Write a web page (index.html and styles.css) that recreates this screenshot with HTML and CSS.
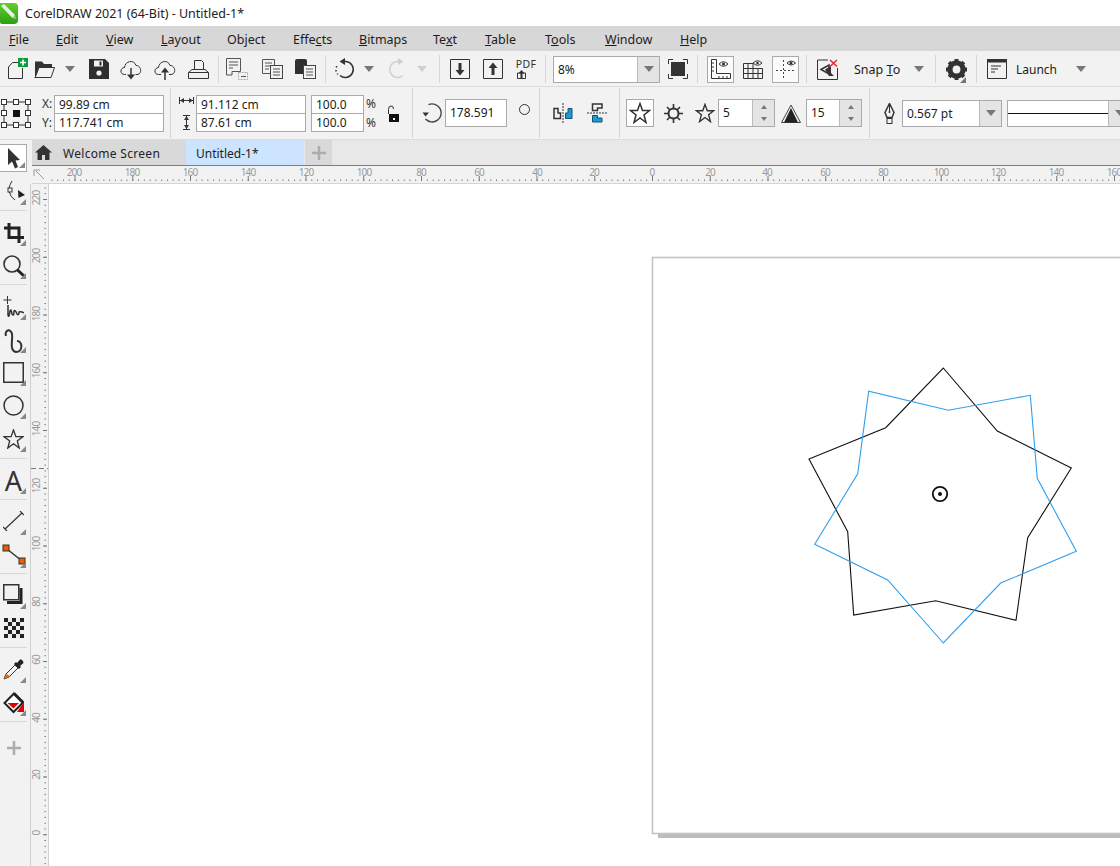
FILE: index.html
```html
<!DOCTYPE html>
<html lang="en">
<head>
    <meta charset="UTF-8">
    <title>CorelDRAW 2021 (64-Bit) - Untitled-1*</title>
    <link rel="stylesheet" href="styles.css">
</head>
<body>
<div class="app">

    <header class="titlebar">
        <svg class="logo" width="18" height="21" viewBox="0 0 18 21">
            <defs>
                <linearGradient id="logoGreen" x1="0" y1="0" x2="0" y2="1">
                    <stop offset="0" stop-color="#5fd02a"/>
                    <stop offset="1" stop-color="#2aa012"/>
                </linearGradient>
            </defs>
            <path d="M0 0H14Q18 0 18 4V17Q18 21 14 21H2Q0 21 0 19Z" fill="url(#logoGreen)"/>
            <path d="M1 3L4 1L15 12L12.500 15Z" fill="#e8efe6"/>
            <path d="M12.500 15L15 12L16 16Z" fill="#9ccf86"/>
        </svg>
        <span>CorelDRAW 2021 (64-Bit) - Untitled-1*</span>
    </header>

    <nav class="menubar">
        <a class="m-file"><u>F</u>ile</a>
        <a class="m-edit"><u>E</u>dit</a>
        <a class="m-view"><u>V</u>iew</a>
        <a class="m-layout"><u>L</u>ayout</a>
        <a class="m-object">Ob<u>j</u>ect</a>
        <a class="m-effects">Effe<u>c</u>ts</a>
        <a class="m-bitmaps"><u>B</u>itmaps</a>
        <a class="m-text">Te<u>x</u>t</a>
        <a class="m-table"><u>T</u>able</a>
        <a class="m-tools">T<u>o</u>ols</a>
        <a class="m-window"><u>W</u>indow</a>
        <a class="m-help"><u>H</u>elp</a>
    </nav>

    <!-- standard toolbar -->
    <div class="toolbar">
        <div class="tb w30"><svg width="22" height="22" viewBox="0 0 22 22"><path d="M6.500 4.500H12M2.500 9L6.500 4.500M2.500 9V20.500H16.500V10" class="ln"/><rect x="12" y="0" width="10" height="9" fill="#0c9a3c"/><path d="M17 1.500V7.500M14 4.500H20" stroke="#fff" stroke-width="1.600"/></svg></div>
        <div class="tb w26"><svg width="22" height="20" viewBox="0 0 22 20"><path d="M1 2.500H8L10 5H18V8H5L1 19Z" fill="#333"/><path d="M1 19L5 8.500H20.500L17 18.500H1Z" class="ln"/></svg></div>
        <div class="tb w24"><i class="dd"></i></div>
        <div class="tb w34"><svg width="20" height="20" viewBox="0 0 20 20"><path d="M0 0H16L20 4V20H0Z" fill="#2f2f2f"/><rect x="5" y="1.500" width="9" height="6" fill="#f2f2f2"/><rect x="10.500" y="2.500" width="2" height="4" fill="#2f2f2f"/><circle cx="10" cy="14" r="2.600" fill="#f2f2f2"/></svg></div>
        <div class="tb w30"><svg width="22" height="21" viewBox="0 0 22 21"><path d="M6 15.500H4.500C-0.500 15.500 0 8.500 4.500 8.500C5 2 14 0 16 6.500C21 6 23 15 17 15.500H15.500" class="ln"/><path d="M11 9V18" class="ln2"/><path d="M7 15.500L11 20.500L15 15.500Z" fill="#333"/></svg></div>
        <div class="tb w38"><svg width="22" height="21" viewBox="0 0 22 21"><path d="M7 15.500H4.500C-0.500 15.500 0 8.500 4.500 8.500C5 2 14 0 16 6.500C21 6 23 15 17 15.500H15" class="ln"/><path d="M11 12V21" class="ln2"/><path d="M7 13.500L11 8.500L15 13.500Z" fill="#333"/></svg></div>
        <div class="tb w28"><svg width="21" height="19" viewBox="0 0 21 19"><path d="M6.500 10V0.500H13.500L15.500 2.500V10M0.500 12.500H20.500V18.500H0.500ZM0.500 12.500L4 9.500H17L20.500 12.500" class="ln"/></svg></div>
        <div class="tb w12"><i class="sep"></i></div>
        <div class="tb w26"><svg width="22" height="22" viewBox="0 0 22 22"><path d="M0.500 0.500H14.500V13.500H6V17H0.500Z" class="ln-soft"/><path d="M3 4H12M3 7H12M3 10H7" class="ln-soft"/><path d="M12.500 14.500H21.500V21.500H12.500Z" fill="#f2f2f2" stroke="#aaa" stroke-dasharray="2 1"/><path d="M15 18.500H20" class="ln-soft"/></svg></div>
        <div class="tb w44"><svg width="21" height="20" viewBox="0 0 21 20"><path d="M0.500 0.500H12.500V14.500H0.500Z" class="ln-soft"/><path d="M3 4H10M3 7H10M3 10H7" class="ln-soft"/><rect x="8.500" y="6.500" width="12" height="13" fill="#f2f2f2" stroke="#444"/><path d="M11 10H18M11 13H18M11 16H18" class="ln-soft"/></svg></div>
        <div class="tb w22"><svg width="21" height="20" viewBox="0 0 21 20"><path d="M0 2Q0 0 2 0H10Q12 0 12 2V15H0Z" fill="#2f2f2f"/><rect x="8.500" y="6.500" width="12" height="13" fill="#f2f2f2" stroke="#444"/><path d="M11 10H18M11 13H18M11 16H18" class="ln-soft"/></svg></div>
        <div class="tb w18"><i class="sep"></i></div>
        <div class="tb w22"><svg width="22" height="22" viewBox="0 0 22 22"><path d="M9.500 3.500H12A8 8 0 1 1 6 17.500" class="ln2"/><path d="M11 0L5.500 3.500L11 7Z" fill="#333"/><path d="M2.500 8V9.500M2 12V13.500M3.500 15.500V16.500" class="ln2"/></svg></div>
        <div class="tb w26"><i class="dd"></i></div>
        <div class="tb w32"><svg width="22" height="22" viewBox="0 0 22 22"><path d="M12.500 3.500H10A8 8 0 1 0 16 17.500" fill="none" stroke="#d0d0d0" stroke-width="1.500"/><path d="M11 0L16.500 3.500L11 7Z" fill="#d0d0d0"/></svg></div>
        <div class="tb w16"><i class="dd dd-off"></i></div>
        <div class="tb w18"><i class="sep"></i></div>
        <div class="tb w24"><svg width="20" height="20" viewBox="0 0 20 20"><path d="M0.500 0.500H19.500V19.500H0.500Z" class="ln"/><path d="M10 4V12" stroke="#333" stroke-width="3"/><path d="M5.500 11H14.500L10 16.500Z" fill="#333"/></svg></div>
        <div class="tb w42"><svg width="20" height="20" viewBox="0 0 20 20"><path d="M0.500 0.500H19.500V19.500H0.500Z" class="ln"/><path d="M10 16V8" stroke="#333" stroke-width="3"/><path d="M5.500 9H14.500L10 3.500Z" fill="#333"/></svg></div>
        <div class="tb w24 pdf"><span>PDF</span><svg width="9" height="9" viewBox="0 0 9 9"><path d="M0.500 3H8.500V8.500H0.500Z" class="ln"/><path d="M4.500 0L7.500 3.500H1.500Z" fill="#333"/><path d="M3.500 3H5.500V8H3.500Z" fill="#333"/></svg></div>
        <div class="tb w15"><i class="sep"></i></div>
        <div class="combo c-zoom"><span class="val">8%</span><span class="arrow"><i class="dd"></i></span></div>
        <div class="tb w36"><svg width="20" height="20" viewBox="0 0 20 20"><path d="M0.500 5V0.500H5M15 0.500H19.500V5M19.500 15V19.500H15M5 19.500H0.500V15" class="ln"/><rect x="3" y="3" width="14" height="14" fill="#333"/></svg></div>
        <div class="tb w2"><i class="sep"></i></div>
        <div class="tb tb-on"><svg width="20" height="20" viewBox="0 0 20 20"><path d="M0.500 0.500H5.500V14.500H19.500V19.500H0.500Z" class="ln"/><path d="M0.500 4H3M0.500 8H3M0.500 12H3M8 19.500V17M12 19.500V17M16 19.500V17" class="ln"/><path d="M8 5Q12.500 0.500 17 5Q12.500 9.500 8 5Z" class="ln"/><circle cx="12.500" cy="5" r="1.500" fill="#333"/></svg></div>
        <div class="tb w38"><svg width="20" height="20" viewBox="0 0 20 20"><path d="M0.500 4.500H10M0.500 9.500H19.500M0.500 14.500H19.500M0.500 19.500H19.500M0.500 4.500V19.500M5 4.500V19.500M10 4.500V19.500M15 9.500V19.500M19.500 9.500V19.500" class="ln"/><path d="M10 4Q14.500 -0.500 19 4Q14.500 8.500 10 4Z" fill="#f2f2f2" stroke="#333"/><circle cx="14.500" cy="4" r="1.300" fill="#333"/></svg></div>
        <div class="tb tb-on"><svg width="20" height="20" viewBox="0 0 20 20"><path d="M7.500 1V20M0 11.500H20" stroke="#444" stroke-dasharray="2 2" fill="none"/><path d="M11 4Q15 0 19.500 4Q15 8 11 4Z" fill="#fff" stroke="#333"/><circle cx="15" cy="4" r="1.500" fill="#333"/></svg></div>
        <div class="tb w14"><i class="sep"></i></div>
        <div class="tb w28"><svg width="21" height="21" viewBox="0 0 21 21"><path d="M11 1H0.500V20.500H20.500V9" class="ln"/><path d="M4 10.500L12 6V15Z" class="ln2"/><path d="M8 10.500L14 7V14L17 17H12Z" fill="#333"/><path d="M13 1L20 7.500M20 1L13 7.500" stroke="#e8262a" stroke-width="1.500"/></svg></div>
        <div class="tb-text tb-snap">Snap <u>T</u>o</div>
        <div class="tb w28"><i class="dd"></i></div>
        <div class="tb w4"><i class="sep"></i></div>
        <div class="tb w38 corner"><svg width="21" height="21" viewBox="0 0 24 24"><circle cx="12" cy="12" r="7.500" fill="none" stroke="#333" stroke-width="6"/><path d="M12 0V5M12 19V24M0 12H5M19 12H24M3.500 3.500L7 7M17 17L20.500 20.500M3.500 20.500L7 17M17 7L20.500 3.500" stroke="#333" stroke-width="4.400"/></svg></div>
        <div class="tb w2"><i class="sep"></i></div>
        <div class="tb w39"><svg width="20" height="20" viewBox="0 0 20 20"><path d="M0.500 0.500H19.500V19.500H0.500Z" class="ln"/><rect x="0" y="0" width="20" height="3.500" fill="#333"/><path d="M4 7H14M4 10H11M4 13H8" class="ln"/></svg></div>
        <div class="tb-text w48">Launch</div>
        <div class="tb w33"><i class="dd"></i></div>
    </div>

    <!-- property bar -->
    <div class="propbar">
        <div class="pb w41"><svg width="30" height="29" viewBox="0 0 30 29"><g fill="#fff" stroke="#333"><rect x="0.500" y="0.500" width="5" height="5"/><rect x="12.500" y="0.500" width="5" height="5"/><rect x="24.500" y="0.500" width="5" height="5"/><rect x="0.500" y="11.500" width="5" height="5"/><rect x="24.500" y="11.500" width="5" height="5"/><rect x="0.500" y="23.500" width="5" height="5"/><rect x="12.500" y="23.500" width="5" height="5"/><rect x="24.500" y="23.500" width="5" height="5"/></g><path d="M6 3H12M18 3H24M3 6V11M27 6V11M3 17V23M27 17V23M6 26H12M18 26H24" stroke="#333"/><rect x="12" y="11" width="7" height="7" fill="#111"/></svg></div>
        <div class="xy-labels"><span>X:</span><span>Y:</span></div>
        <div class="stack w110"><div class="field">99.89 cm</div><div class="field">117.741 cm</div></div>
        <div class="pb w12"><i class="sep-tall"></i></div>
        <div class="size-icons">
            <svg width="15" height="7" viewBox="0 0 15 7"><path d="M0.500 0V7M14.500 0V7" stroke="#333"/><path d="M1 3.500H14" stroke="#333"/><path d="M1 3.500L5 1V6ZM14 3.500L10 1V6Z" fill="#333"/></svg>
            <svg width="7" height="15" viewBox="0 0 7 15"><path d="M0 0.500H7M0 14.500H7" stroke="#333"/><path d="M3.500 1V14" stroke="#333"/><path d="M3.500 1L1 5H6ZM3.500 14L1 10H6Z" fill="#333"/></svg>
        </div>
        <div class="stack w110"><div class="field">91.112 cm</div><div class="field">87.61 cm</div></div>
        <div class="stack w53 pct"><div class="field">100.0</div><div class="field">100.0</div></div>
        <div class="xy-labels pct-labels"><span>%</span><span>%</span></div>
        <div class="pb w36"><svg width="12" height="17" viewBox="0 0 12 17"><path d="M1.500 9V4.500Q1.500 1 4 1Q6.500 1 6.500 4" class="ln"/><rect x="2" y="9" width="10" height="8" fill="#111"/><rect x="6" y="13" width="2" height="2" fill="#fff"/></svg></div>
        <div class="pb w2"><i class="sep-tall"></i></div>
        <div class="pb w32 rot"><svg width="20" height="20" viewBox="0 0 20 20"><path d="M6.500 1.700A9 9 0 1 1 3.500 16" fill="none" stroke="#444" stroke-width="1.400"/><path d="M0.500 9.500H7L3.500 13.500Z" fill="#333"/></svg></div>
        <div class="field single w62">178.591</div>
        <div class="pb w31 deg"><i class="deg-mark"></i></div>
        <div class="pb w2"><i class="sep-tall"></i></div>
        <div class="pb w46"><svg width="20" height="20" viewBox="0 0 20 20"><path d="M1 5.500H5V10H7.500V15.500H1Z" fill="#f2f2f2" stroke="#333" stroke-width="1.500"/><path d="M10 0V20" stroke="#333" stroke-dasharray="2 1"/><path d="M19 5.500H15V10H12.500V15.500H19Z" fill="#1a9bd7" stroke="#16506e"/></svg></div>
        <div class="pb w22"><svg width="21" height="20" viewBox="0 0 21 20"><path d="M5.500 1H15V5H10.500V7.500H5.500Z" fill="#f2f2f2" stroke="#333" stroke-width="1.500"/><path d="M0 10H21" stroke="#333" stroke-dasharray="2 1"/><path d="M5.500 19H15V15H10.500V12.500H5.500Z" fill="#1a9bd7" stroke="#16506e"/></svg></div>
        <div class="pb w10"></div>
        <div class="pb w2"><i class="sep-tall"></i></div>
        <div class="pb w6"></div>
        <div class="star-btn"><svg width="22" height="22" viewBox="0 0 22 22"><path d="M11 1.500L13.500 8.500H20.500L15 13L17 20.500L11 16L5 20.500L7 13L1.500 8.500H8.500Z" class="ln2"/></svg></div>
        <div class="pb w38"><svg width="19" height="19" viewBox="0 0 19 19"><circle cx="9.500" cy="9.500" r="5" fill="none" stroke="#333" stroke-width="2"/><path d="M9.500 0V5M9.500 14V19M0 9.500H5M14 9.500H19M3 3L6 6M13 13L16 16M3 16L6 13M13 6L16 3" stroke="#333" stroke-width="1.600"/></svg></div>
        <div class="pb w26"><svg width="20" height="20" viewBox="0 0 22 22"><path d="M11 1.500L13.500 8.500H20.500L15 13L17 20.500L11 16L5 20.500L7 13L1.500 8.500H8.500Z" class="ln2"/></svg></div>
        <div class="spin w57"><span class="val">5</span><span class="spin-btns"><i class="up"></i><i class="down"></i></span></div>
        <div class="pb w31"><svg width="20" height="20" viewBox="0 0 20 20"><path d="M10 2L19.500 19.500H0.500Z" fill="#f2f2f2" stroke="#444"/><path d="M10 5L17 19.500H3Z" fill="#222"/></svg></div>
        <div class="spin w56"><span class="val">15</span><span class="spin-btns"><i class="up"></i><i class="down"></i></span></div>
        <div class="pb w14"><i class="sep-tall"></i></div>
        <div class="pb w26"><svg width="11" height="21" viewBox="0 0 11 21"><path d="M5.500 0.500L10 9.500L8 14.500H3L1 9.500Z" class="ln2"/><path d="M5.500 1V8" stroke="#333"/><circle cx="5.500" cy="9" r="1" fill="#333"/><rect x="3" y="15.500" width="5" height="5" class="ln"/></svg></div>
        <div class="combo c-pen"><span class="val">0.567 pt</span><span class="arrow"><i class="dd"></i></span></div>
        <div class="combo c-line"><span class="line-val"></span><span class="arrow"><i class="dd"></i></span></div>
    </div>

    <div class="main">
        <!-- toolbox -->
        <aside class="toolbox">
            <div class="tool tool-pick more"><svg width="13" height="21" viewBox="0 0 13 21"><path d="M1 0L1 17L5 13.500L8 20.500L11 19L8.500 12.500L13 12Z" fill="#333"/></svg></div>
            <div class="tool more"><svg width="22" height="24" viewBox="0 0 22 24"><path d="M9 1Q5 8 6 11Q7 17 12 20" class="ln"/><rect x="5" y="8" width="4" height="4" fill="#f2f2f2" stroke="#333"/><path d="M15 10L22 15L15.500 18Z" fill="#222"/></svg></div>
            <i class="tool-sep"></i>
            <div class="tool more"><svg width="20" height="20" viewBox="0 0 20 20"><path d="M5 0V14.500H20M0 5H15V20" fill="none" stroke="#222" stroke-width="3"/></svg></div>
            <div class="tool more tool-zoom"><svg width="24" height="24" viewBox="0 0 24 24"><circle cx="10" cy="10" r="8" fill="none" stroke="#333" stroke-width="1.600"/><path d="M15.500 16L22 22" stroke="#222" stroke-width="3"/></svg></div>
            <i class="tool-sep"></i>
            <div class="tool more tool-low"><svg width="21" height="24" viewBox="0 0 21 24"><path d="M4.500 0V8M0.500 4H8.500" stroke="#333"/><path d="M5 9V19Q6 23 7 15Q8 12 9 18Q11 21 11 15Q12 13 14 18Q16 20 16 16Q18 15 21 17" fill="none" stroke="#333" stroke-width="1.500"/></svg></div>
            <div class="tool more tool-low"><svg width="21" height="24" viewBox="0 0 21 24"><path d="M3 7C1 1 8 -1 9 5C10 11 6 22 13 23C20 23 20 12 14 12" fill="none" stroke="#333" stroke-width="2"/></svg></div>
            <div class="tool more"><svg width="21" height="21" viewBox="0 0 21 21"><rect x="0.750" y="0.750" width="19.500" height="19.500" fill="none" stroke="#333" stroke-width="1.500"/></svg></div>
            <div class="tool more"><svg width="21" height="21" viewBox="0 0 21 21"><circle cx="10.500" cy="10.500" r="9.500" fill="none" stroke="#333" stroke-width="1.500"/></svg></div>
            <div class="tool more"><svg width="21" height="20" viewBox="0 0 22 21"><path d="M11 1L13.500 8H21L15 12.500L17 20L11 15.500L5 20L7 12.500L1 8H8.500Z" fill="none" stroke="#333" stroke-width="1.400"/></svg></div>
            <i class="tool-sep tool-sep-low"></i>
            <div class="tool more tool-a">A</div>
            <i class="tool-sep"></i>
            <div class="tool more tool-up"><svg width="21" height="20" viewBox="0 0 21 20"><path d="M2 18L19 2" stroke="#333" stroke-width="1.200"/><path d="M0 16L4 20M17 0L21 4" stroke="#333" stroke-width="1.200"/></svg></div>
            <div class="tool more"><svg width="24" height="22" viewBox="0 0 24 22"><path d="M5 5L20 17" stroke="#333" stroke-width="1.400"/><rect x="1" y="1" width="6" height="6" fill="#f05a00" stroke="#333"/><rect x="17" y="14" width="6" height="6" fill="#f05a00" stroke="#333"/></svg></div>
            <i class="tool-sep"></i>
            <div class="tool more tool-up"><svg width="21" height="21" viewBox="0 0 21 21"><rect x="0.750" y="0.750" width="15" height="15" fill="none" stroke="#333" stroke-width="1.500"/><path d="M18 4V18.500H4" fill="none" stroke="#222" stroke-width="3"/></svg></div>
            <div class="tool tool-up"><svg width="20" height="20" viewBox="0 0 20 20"><rect width="20" height="20" fill="#222"/><g fill="#eee"><rect x="4" y="0" width="4" height="4"/><rect x="12" y="0" width="4" height="4"/><rect x="0" y="4" width="4" height="4"/><rect x="8" y="4" width="4" height="4"/><rect x="16" y="4" width="4" height="4"/><rect x="4" y="8" width="4" height="4"/><rect x="12" y="8" width="4" height="4"/><rect x="0" y="12" width="4" height="4"/><rect x="8" y="12" width="4" height="4"/><rect x="16" y="12" width="4" height="4"/><rect x="4" y="16" width="4" height="4"/><rect x="12" y="16" width="4" height="4"/></g></svg></div>
            <i class="tool-sep"></i>
            <div class="tool more"><svg width="21" height="21" viewBox="0 0 21 21"><path d="M1 20L3 15L12 6L15 9L6 18Z" fill="#f2f2f2" stroke="#333"/><path d="M1 20L3 15L7 17L6 18Z" fill="#e06a10"/><path d="M11 5L13 3L14 4L17 0.500Q20 0 20.500 4L17 7L18 8L16 10Z" fill="#222"/></svg></div>
            <div class="tool more-red"><svg width="21" height="22" viewBox="0 0 21 22"><path d="M11 1.500L20 10.500L10.500 20L1.500 11Z" fill="#fff" stroke="#222" stroke-width="2"/><path d="M4.500 11H16L10.500 16.500Z" fill="#e80000"/><path d="M11 1.500L20 10.500" stroke="#222" stroke-width="3"/></svg></div>
            <i class="tool-sep"></i>
            <div class="tool tool-add"><svg width="14" height="14" viewBox="0 0 14 14"><path d="M7 0V14M0 7H14" stroke="#acacac" stroke-width="2.500"/></svg></div>
        </aside>

        <div class="workspace">
            <div class="tabs">
                <div class="tab-home"><svg width="17" height="15" viewBox="0 0 17 15"><path d="M8.500 0L17 7.500H14.500V15H10V10H7V15H2.500V7.500H0Z" fill="#333"/></svg></div>
                <div class="tab tab-welcome">Welcome Screen</div>
                <div class="tab tab-doc">Untitled-1*</div>
                <div class="tab tab-add"><svg width="14" height="14" viewBox="0 0 14 14"><path d="M7 0V14M0 7H14" stroke="#acacac" stroke-width="2.500"/></svg></div>
            </div>

            <svg class="hruler" width="1088" height="18" viewBox="32 166 1088 18">
                <defs>
                    <pattern id="hdots" x="16.750" y="166" width="5.775" height="20" patternUnits="userSpaceOnUse"><rect x="0" y="13.500" width="1" height="1.500" fill="#777"/></pattern>
                    <pattern id="hticks" x="16.750" y="166" width="57.750" height="20" patternUnits="userSpaceOnUse"><rect x="0" y="10" width="1" height="5" fill="#777"/></pattern>
                </defs>
                <rect x="48" y="166" width="1072" height="18" fill="url(#hticks)"/>
                <rect x="48" y="166" width="1072" height="18" fill="url(#hdots)"/>
                <path d="M32 183.500H1120" stroke="#d4d4d4"/>
                <path d="M36 171L44 179M34 176V170H40" stroke="#999" fill="none"/>
                <g class="rtext" text-anchor="middle">
                    <text x="74" y="176">200</text><text x="132" y="176">180</text><text x="190" y="176">160</text><text x="248" y="176">140</text><text x="306" y="176">120</text><text x="364" y="176">100</text><text x="421" y="176">80</text><text x="479" y="176">60</text><text x="537" y="176">40</text><text x="594" y="176">20</text><text x="652" y="176">0</text><text x="710" y="176">20</text><text x="767" y="176">40</text><text x="825" y="176">60</text><text x="883" y="176">80</text><text x="941" y="176">100</text><text x="998" y="176">120</text><text x="1056" y="176">140</text><text x="1114" y="176">160</text>
                </g>
            </svg>

            <div class="body-row">
                <svg class="vruler" width="18" height="682" viewBox="30 184 18 682">
                    <defs>
                        <pattern id="vdots" x="30" y="199" width="20" height="5.775" patternUnits="userSpaceOnUse"><rect x="14.500" y="0" width="1.500" height="1" fill="#777"/></pattern>
                        <pattern id="vticks" x="30" y="199" width="20" height="57.750" patternUnits="userSpaceOnUse"><rect x="13" y="0" width="4" height="1" fill="#777"/></pattern>
                    </defs>
                    <rect x="30" y="184" width="18" height="682" fill="url(#vticks)"/>
                    <rect x="30" y="184" width="18" height="682" fill="url(#vdots)"/>
                    <path d="M30.500 184V866" stroke="#cfcfcf"/>
                    <path d="M31 468.500H48" stroke="#777" stroke-dasharray="5 3"/>
                    <g class="rtext" text-anchor="middle">
                        <text transform="translate(40 198) rotate(-90)">220</text><text transform="translate(40 256) rotate(-90)">200</text><text transform="translate(40 314) rotate(-90)">180</text><text transform="translate(40 371) rotate(-90)">160</text><text transform="translate(40 429) rotate(-90)">140</text><text transform="translate(40 486) rotate(-90)">120</text><text transform="translate(40 544) rotate(-90)">100</text><text transform="translate(40 602) rotate(-90)">80</text><text transform="translate(40 660) rotate(-90)">60</text><text transform="translate(40 718) rotate(-90)">40</text><text transform="translate(40 775) rotate(-90)">20</text><text transform="translate(40 833) rotate(-90)">0</text>
                    </g>
                </svg>

                <svg class="canvas" width="1072" height="682" viewBox="48 184 1072 682">
                    <path d="M48.500 184V866" stroke="#d0d0d0"/>
                    <rect x="658" y="263" width="470" height="575" fill="#bcbcbc"/>
                    <rect x="652.500" y="257.500" width="480" height="576" fill="#fff" stroke="#c4c4c4" stroke-width="1.600"/>
                    <path d="M943.300 368L997.300 431L1071.300 468L1027.700 537.700L1016 620.300L935.700 600.700L853.700 615L847.700 531.700L809 459L885.700 427.700Z" fill="none" stroke="#111" stroke-width="1.100"/>
                    <path d="M943.300 643L887.700 580L814.700 544.300L857.700 473.700L868.700 391.300L948.300 410.300L1030.300 395.300L1037.300 478.300L1076.300 551.300L1000.700 583Z" fill="none" stroke="#2f9fee" stroke-width="1.100"/>
                    <circle cx="940" cy="494" r="7.200" fill="none" stroke="#111" stroke-width="1.800"/>
                    <circle cx="940" cy="494" r="2" fill="#111"/>
                </svg>
            </div>
        </div>
    </div>
</div>
</body>
</html>
```

FILE: styles.css
```css
* {
    box-sizing: border-box;
}
body {
    margin: 0;
    background-color: #fff;
    font-family: "Noto Sans", Arial, sans-serif;
    font-size: 12px;
    color: #222;
}
.app {
    width: 1120px;
    height: 866px;
    overflow: hidden;
    display: flex;
    flex-direction: column;
}
svg {
    display: block;
}
i {
    display: block;
}

/* shared icon strokes */
.ln {
    fill: none;
    stroke: #333;
    stroke-width: 1;
}
.ln2 {
    fill: none;
    stroke: #333;
    stroke-width: 1.500;
}
.ln-soft {
    fill: none;
    stroke: #555;
    stroke-width: 1;
}

/* title bar */
.titlebar {
    height: 26px;
    background-color: #fff;
    display: flex;
    align-items: center;
    font-size: 12.500px;
    color: #222;
}
.logo {
    margin-right: 7px;
}

/* menu */
.menubar {
    height: 25px;
    background-color: #d7d7d7;
    display: flex;
    align-items: center;
    padding-left: 9px;
    padding-top: 2px;
    font-size: 12.500px;
    color: #1c1c1c;
}
.m-file { width: 47px; }
.m-edit { width: 50px; }
.m-view { width: 55px; }
.m-layout { width: 66px; }
.m-object { width: 66px; }
.m-effects { width: 66px; }
.m-bitmaps { width: 74px; }
.m-text { width: 52px; }
.m-table { width: 60px; }
.m-tools { width: 60px; }
.m-window { width: 75px; }

/* toolbar */
.toolbar {
    height: 36px;
    background-color: #f2f2f2;
    border-bottom: 1px solid #dcdcdc;
    display: flex;
    align-items: center;
    padding-left: 2px;
    padding-top: 1px;
}
.tb {
    height: 27px;
    display: flex;
    align-items: center;
    justify-content: center;
    flex: none;
    position: relative;
}
.tb-on {
    width: 27px;
    background-color: #fbfbfb;
    border: 1px solid #aaa;
    margin-left: 9px;
}
.tb-on + .w38 + .tb-on {
    margin-left: 0;
}
.tb-text {
    flex: none;
    font-size: 12px;
    color: #1c1c1c;
}
.tb-snap {
    width: 64px;
    padding-left: 13px;
    font-size: 12.500px;
}
.w2 { width: 2px; }
.w4 { width: 4px; }
.w6 { width: 6px; }
.w10 { width: 10px; }
.w12 { width: 12px; }
.w14 { width: 14px; }
.w15 { width: 15px; }
.w16 { width: 16px; }
.w18 { width: 18px; }
.w22 { width: 22px; }
.w24 { width: 24px; }
.w26 { width: 26px; }
.w28 { width: 28px; }
.w30 { width: 30px; }
.w31 { width: 31px; }
.w32 { width: 32px; }
.w33 { width: 33px; }
.w34 { width: 34px; }
.w36 { width: 36px; }
.w38 { width: 38px; }
.w39 { width: 39px; }
.w40 { width: 40px; }
.w41 { width: 41px; }
.w42 { width: 42px; }
.w44 { width: 44px; }
.w46 { width: 46px; }
.w48 { width: 48px; }
.w53 { width: 53px; }
.w56 { width: 56px; }
.w57 { width: 57px; }
.w62 { width: 62px; }
.w110 { width: 110px; }

.dd {
    width: 0;
    height: 0;
    border-left: 5.500px solid transparent;
    border-right: 5.500px solid transparent;
    border-top: 6px solid #777;
}
.dd-off {
    border-top-color: #d0d0d0;
}
.sep {
    width: 1px;
    height: 28px;
    background-color: #d8d8d8;
    flex: none;
}
.sep-tall {
    width: 1px;
    height: 50px;
    background-color: #d4d4d4;
    flex: none;
}
.corner::after {
    content: "";
    position: absolute;
    right: 9px;
    bottom: 0;
    border-left: 6px solid transparent;
    border-bottom: 6px solid #777;
}
.pdf {
    flex-direction: column;
    font-size: 10.500px;
    line-height: 10px;
    letter-spacing: 0.300px;
    color: #333;
}
.pdf svg {
    margin-top: 1px;
    margin-right: 9px;
}

/* combos */
.combo {
    height: 27px;
    flex: none;
    display: flex;
    align-items: stretch;
    border: 1px solid #aaa;
    background-color: #fff;
    font-size: 12px;
}
.combo .val {
    flex: 1;
    padding-left: 4px;
    line-height: 25px;
    color: #1c1c1c;
}
.combo .arrow {
    width: 22px;
    background-color: #e4e4e4;
    border-left: 1px solid #bbb;
    display: flex;
    align-items: center;
    justify-content: center;
}
.c-zoom {
    width: 107px;
}
.c-pen {
    width: 100px;
    margin-right: 5px;
}
.c-line {
    width: 124px;
}
.line-val {
    flex: 1;
    align-self: center;
    height: 1px;
    background-color: #111;
}

/* property bar */
.propbar {
    height: 53px;
    background-color: #f2f2f2;
    border-bottom: 1px solid #dcdcdc;
    display: flex;
    align-items: center;
    padding-left: 1px;
}
.pb {
    height: 50px;
    flex: none;
    display: flex;
    align-items: center;
    justify-content: center;
}
.pb.w41 {
    justify-content: flex-start;
}
.rot {
    padding-left: 6px;
}
.xy-labels {
    width: 12px;
    flex: none;
    display: flex;
    flex-direction: column;
    padding-top: 1px;
    font-size: 12px;
    line-height: 18px;
    color: #333;
}
.xy-labels span {
    height: 18.500px;
}
.pct-labels {
    width: 9px;
    margin-left: 2px;
}
.stack {
    flex: none;
    display: flex;
    flex-direction: column;
}
.stack.pct {
    margin-left: 5px;
}
.field {
    height: 19px;
    margin-bottom: -1px;
    background-color: #fff;
    border: 1px solid #aaa;
    padding-left: 4px;
    line-height: 18px;
    font-size: 12px;
    color: #1c1c1c;
    white-space: nowrap;
}
.stack .field:last-child {
    margin-bottom: 0;
}
.field.single {
    height: 28px;
    margin-bottom: 0;
    line-height: 26px;
    flex: none;
}
.size-icons {
    width: 16px;
    margin-left: 2px;
    margin-right: 2px;
    flex: none;
    display: flex;
    flex-direction: column;
    align-items: center;
    gap: 11px;
}
.deg-mark {
    width: 11px;
    height: 11px;
    border: 1.300px solid #333;
    border-radius: 50%;
    margin-left: 3px;
    margin-bottom: 8px;
}
.star-btn {
    width: 28px;
    height: 28px;
    flex: none;
    border: 1px solid #aaa;
    background-color: #fff;
    display: flex;
    align-items: center;
    justify-content: center;
}
.spin {
    height: 28px;
    flex: none;
    display: flex;
    border: 1px solid #aaa;
    background-color: #fff;
    font-size: 12px;
}
.spin .val {
    flex: 1;
    padding-left: 4px;
    line-height: 26px;
    color: #1c1c1c;
}
.spin-btns {
    width: 22px;
    background-color: #e4e4e4;
    border-left: 1px solid #bbb;
    display: flex;
    flex-direction: column;
    align-items: center;
    justify-content: center;
    gap: 8px;
}
.spin-btns .up,
.spin-btns .down {
    width: 0;
    height: 0;
    border-left: 3.500px solid transparent;
    border-right: 3.500px solid transparent;
}
.spin-btns .up {
    border-bottom: 4px solid #777;
}
.spin-btns .down {
    border-top: 4px solid #777;
}

/* main area */
.main {
    flex: 1;
    display: flex;
    min-height: 0;
}
.toolbox {
    width: 30px;
    flex: none;
    background-color: #f2f2f2;
    display: flex;
    flex-direction: column;
    padding-top: 4px;
}
.tool {
    width: 27px;
    height: 33px;
    flex: none;
    display: flex;
    align-items: center;
    justify-content: center;
    position: relative;
}
.tool-pick {
    height: 28px;
    background-color: #fff;
    border: 1px solid #aaa;
    border-left: none;
    margin-bottom: 3px;
}
.tool-low {
    padding-top: 3px;
}
.tool-up {
    padding-bottom: 2px;
}
.more::after,
.more-red::after {
    content: "";
    position: absolute;
    right: 1px;
    bottom: 3px;
    border-left: 6px solid transparent;
    border-bottom: 6px solid #888;
}
.more-red::before {
    content: "";
    position: absolute;
    right: 3px;
    bottom: 7px;
    border-left: 7px solid transparent;
    border-bottom: 10px solid #e80000;
}
.tool-sep {
    width: 27px;
    height: 1px;
    background-color: #d8d8d8;
    flex: none;
    margin: 2px 0 5px;
}
.tool-sep-low {
    margin-top: 3px;
}
.tool-a {
    font-size: 27px;
    line-height: 33px;
    color: #333;
}
.tool-add {
    margin-top: 4px;
}

/* tabs and rulers */
.workspace {
    flex: 1;
    min-width: 0;
    display: flex;
    flex-direction: column;
    background-color: #f2f2f2;
}
.tabs {
    height: 26px;
    flex: none;
    margin-left: 2px;
    background-color: #e8e8e8;
    border-bottom: 1px solid #1e9be0;
    display: flex;
    font-size: 12px;
}
.tab-home {
    width: 22px;
    display: flex;
    align-items: center;
    justify-content: center;
    background-color: #d9d9d9;
}
.tab {
    display: flex;
    align-items: center;
    padding-top: 1px;
    color: #222;
}
.tab-welcome {
    width: 132px;
    padding-left: 9px;
    letter-spacing: 0.300px;
    background-color: #d9d9d9;
}
.tab-doc {
    width: 118px;
    padding-left: 10px;
    background-color: #cce4ff;
}
.tab-add {
    width: 27px;
    margin-left: 1px;
    justify-content: center;
    background-color: #d9d9d9;
}
.hruler {
    flex: none;
    margin-left: 2px;
}
.rtext text {
    font-family: "Noto Sans", Arial, sans-serif;
    font-size: 10px;
    letter-spacing: -0.900px;
    fill: #9a9a9a;
}
.body-row {
    flex: 1;
    display: flex;
    min-height: 0;
}
.vruler {
    flex: none;
}
.canvas {
    flex: none;
    background-color: #fff;
}
```
